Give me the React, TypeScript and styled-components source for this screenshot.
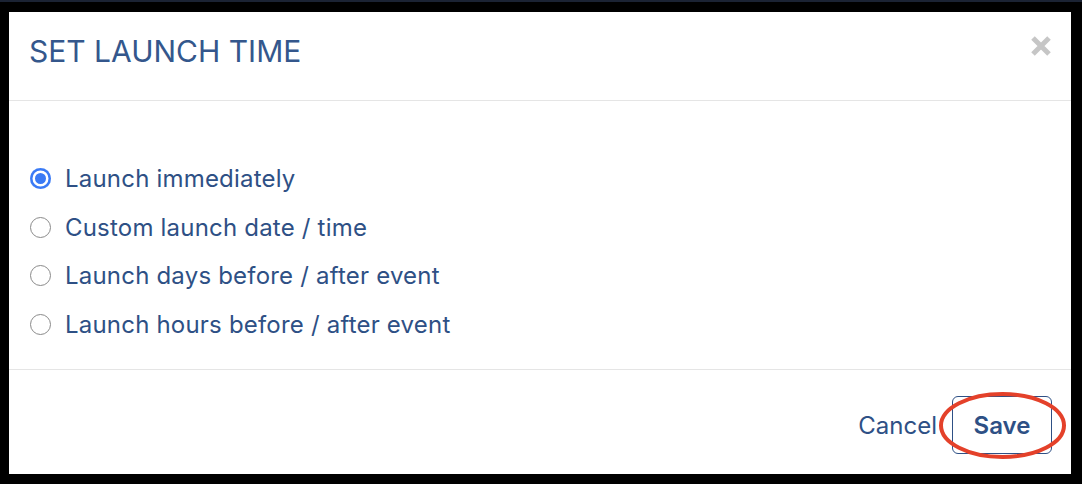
import styled, { createGlobalStyle } from "styled-components";

const GlobalStyle = createGlobalStyle`
  html, body {
    margin: 0;
    padding: 0;
    background: #000;
  }
  body {
    font-family: Inter, "Liberation Sans", Arial, sans-serif;
  }
`;

const options = [
  "Launch immediately",
  "Custom launch date / time",
  "Launch days before / after event",
  "Launch hours before / after event",
];

export default function App() {
  const selected = 0;

  return (
    <>
      <GlobalStyle />
      <Backdrop>
        <Modal>
          <Header>
            <Title>SET LAUNCH TIME</Title>
            <CloseButton aria-label="Close">
              <svg width="20" height="20" viewBox="0 0 20 20">
                <path
                  d="M2 2 L18 18 M18 2 L2 18"
                  stroke="#c6c6c6"
                  strokeWidth="5"
                  strokeLinecap="butt"
                />
              </svg>
            </CloseButton>
          </Header>

          <Body>
            {options.map((label, i) => (
              <Option key={label}>
                <Radio $checked={i === selected} />
                <OptionLabel>{label}</OptionLabel>
              </Option>
            ))}
          </Body>

          <Footer>
            <CancelButton>Cancel</CancelButton>
            <SaveWrap>
              <SaveButton>Save</SaveButton>
              {/* red hand-drawn highlight over the save button */}
              <Highlight width="131" height="71" viewBox="0 0 131 71">
                <ellipse
                  cx="65.5"
                  cy="35.5"
                  rx="61.5"
                  ry="31.5"
                  fill="none"
                  stroke="#e4412a"
                  strokeWidth="4"
                />
              </Highlight>
            </SaveWrap>
          </Footer>
        </Modal>
      </Backdrop>
    </>
  );
}

/**
 * styles
 */
const Backdrop = styled.div`
  box-sizing: border-box;
  width: 1082px;
  height: 484px;
  padding: 10px 11px 10px 9px;
  border-top: 2px solid #1b2334;
  display: flex;
`;

const Modal = styled.div`
  flex: 1;
  background: #fff;
  display: flex;
  flex-direction: column;
`;

const Header = styled.div`
  height: 88px;
  padding: 0 20px 0 20px;
  border-bottom: 1px solid #e5e5e5;
  display: flex;
  align-items: center;
  justify-content: space-between;
`;

const Title = styled.h4`
  margin: -10px 0 0 0;
  font-size: 30px;
  font-weight: 400;
  color: #34578c;
`;

const CloseButton = styled.button`
  border: none;
  background: none;
  padding: 0;
  margin-top: -20px;
  display: flex;
  cursor: pointer;
`;

const Body = styled.div`
  flex: 1;
  padding: 53px 21px 0 21px;
  display: flex;
  flex-direction: column;
`;

const Option = styled.label`
  height: 48.7px;
  display: flex;
  align-items: center;
  gap: 14px;
  cursor: pointer;
`;

const Radio = styled.span<{ $checked: boolean }>`
  box-sizing: border-box;
  width: 21px;
  height: 21px;
  border-radius: 50%;
  flex-shrink: 0;
  background: ${(p) => (p.$checked ? "#3a7af5" : "#fff")};
  border: ${(p) => (p.$checked ? "none" : "1.5px solid #8a8a8a")};
  box-shadow: ${(p) => (p.$checked ? "inset 0 0 0 2.5px #3a7af5, inset 0 0 0 5px #fff" : "none")};
`;

const OptionLabel = styled.span`
  font-size: 24px;
  letter-spacing: 0.2px;
  color: #2e5085;
`;

const Footer = styled.div`
  height: 105px;
  box-sizing: border-box;
  border-top: 1px solid #e5e5e5;
  padding: 26px 19px 0 0;
  display: flex;
  align-items: flex-start;
  justify-content: flex-end;
`;

const CancelButton = styled.button`
  height: 58px;
  border: none;
  background: none;
  padding: 0 15px;
  font-family: inherit;
  font-size: 24px;
  color: #2e5085;
  cursor: pointer;
`;

const SaveWrap = styled.div`
  position: relative;
`;

const SaveButton = styled.button`
  box-sizing: border-box;
  width: 100px;
  height: 58px;
  border: 1px solid #2e5085;
  border-radius: 6px;
  background: #fff;
  font-family: inherit;
  font-size: 24px;
  font-weight: 600;
  color: #2e5085;
  cursor: pointer;
`;

const Highlight = styled.svg`
  position: absolute;
  left: -15.5px;
  top: -6.5px;
  pointer-events: none;
`;
